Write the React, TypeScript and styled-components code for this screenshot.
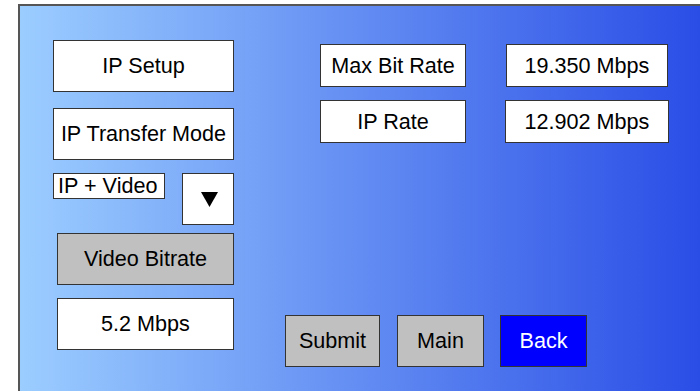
import styled, { createGlobalStyle } from "styled-components";

const GlobalStyle = createGlobalStyle`
  html, body {
    margin: 0;
    padding: 0;
    background: #ffffff;
    overflow: hidden;
  }
  body {
    font-family: "Liberation Sans", Arial, sans-serif;
  }
`;

const Panel = styled.div`
  margin: 4px 0 0 18px;
  width: 682px;
  height: 387px;
  box-sizing: border-box;
  border-top: 2px solid #555;
  border-left: 2px solid #555;
  background: linear-gradient(to right, #9ccdff, #2a4de6);
  padding: 34px 0 0 33px;
  display: flex;
`;

const LeftColumn = styled.div`
  width: 181px;
  display: flex;
  flex-direction: column;
`;

const Box = styled.div<{ $w?: number; $h?: number; $fill?: string; $color?: string; $mt?: number }>`
  box-sizing: border-box;
  width: ${(p) => (p.$w ? `${p.$w}px` : "100%")};
  height: ${(p) => p.$h ?? 52}px;
  margin-top: ${(p) => p.$mt ?? 0}px;
  border: 1px solid #333;
  background: ${(p) => p.$fill ?? "#ffffff"};
  color: ${(p) => p.$color ?? "#000000"};
  font-size: 21.6px;
  display: flex;
  align-items: center;
  justify-content: center;
  white-space: nowrap;
`;

const IndentBox = styled(Box)`
  align-self: flex-end;
`;

const ModeRow = styled.div`
  display: flex;
  justify-content: space-between;
  align-items: flex-start;
  margin-top: 13px;
`;

const ModeValue = styled.div`
  box-sizing: border-box;
  width: 112px;
  height: 26px;
  border: 1px solid #333;
  background: #ffffff;
  font-size: 21.6px;
  line-height: 24px;
  padding-left: 4px;
  white-space: nowrap;
`;

const DropButton = styled.div`
  box-sizing: border-box;
  width: 52px;
  height: 52px;
  border: 1px solid #333;
  background: #ffffff;
  display: flex;
  align-items: center;
  justify-content: center;
  padding-left: 2px;
`;

const RightArea = styled.div`
  display: flex;
  flex-direction: column;
`;

const RateGrid = styled.div`
  margin: 4px 0 0 86px;
  display: grid;
  grid-template-columns: 146px 164px;
  column-gap: 39px;
  row-gap: 13px;
  justify-items: center;
`;

const ButtonRow = styled.div`
  margin: 172px 0 0 51px;
  display: flex;
  gap: 17px;
`;

const Button = styled(Box)`
  cursor: pointer;
`;

const BackButton = styled(Button)`
  margin-left: -1px;
`;

export default function App() {
  return (
    <>
      <GlobalStyle />
      <Panel>
        <LeftColumn>
          <Box>IP Setup</Box>
          <Box $mt={16}>IP Transfer Mode</Box>
          <ModeRow>
            <ModeValue>IP + Video</ModeValue>
            <DropButton>
              <svg width="17" height="15" viewBox="0 0 17 15">
                <polygon points="0,0 17,0 8.5,15" fill="#000" />
              </svg>
            </DropButton>
          </ModeRow>
          <IndentBox $w={177} $mt={8} $fill="#c0c0c0">
            Video Bitrate
          </IndentBox>
          <IndentBox $w={177} $mt={13}>
            5.2 Mbps
          </IndentBox>
        </LeftColumn>
        <RightArea>
          <RateGrid>
            <Box $w={146} $h={43}>Max Bit Rate</Box>
            <Box $w={162} $h={43}>19.350 Mbps</Box>
            <Box $w={146} $h={43}>IP Rate</Box>
            <Box $w={164} $h={43}>12.902 Mbps</Box>
          </RateGrid>
          <ButtonRow>
            <Button $w={95} $fill="#c0c0c0">Submit</Button>
            <Button $w={87} $fill="#c0c0c0">Main</Button>
            <BackButton $w={87} $fill="#0000ff" $color="#ffffff">
              Back
            </BackButton>
          </ButtonRow>
        </RightArea>
      </Panel>
    </>
  );
}
